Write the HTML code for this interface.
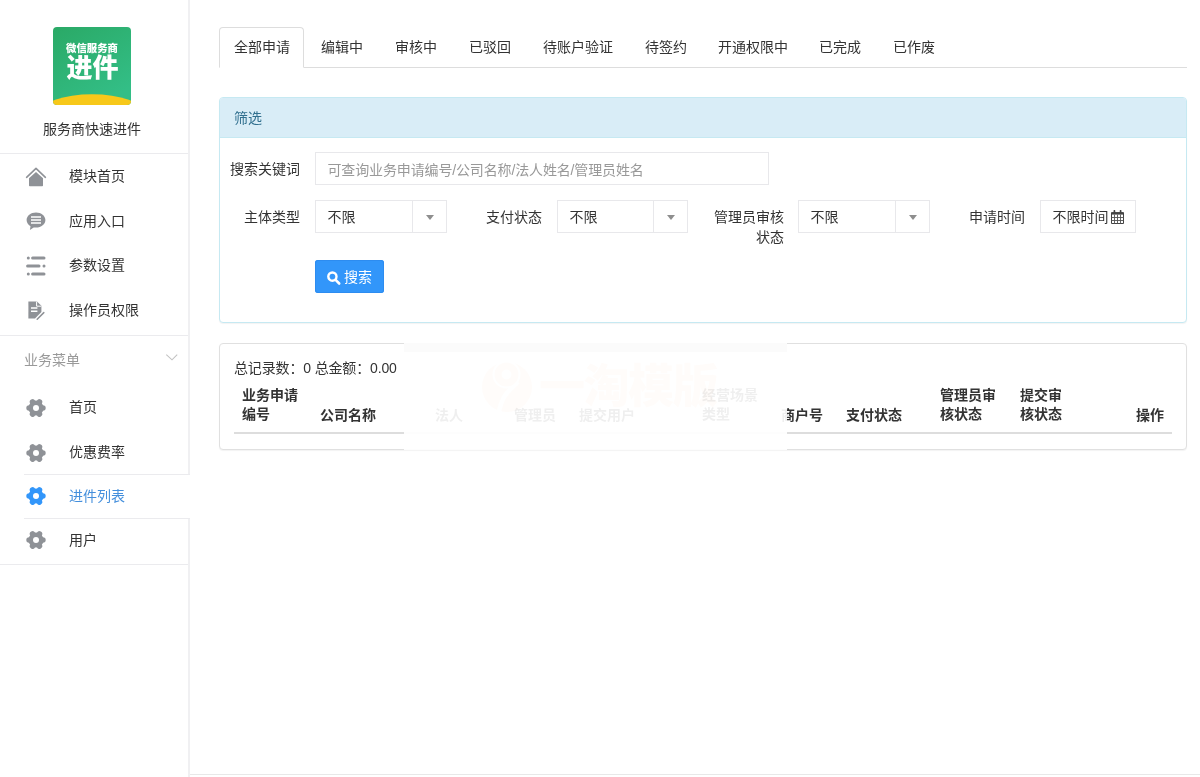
<!DOCTYPE html>
<html lang="zh-CN">
<head>
<meta charset="utf-8">
<title>服务商快速进件</title>
<style>
*{box-sizing:border-box;margin:0;padding:0}
html,body{width:1200px;height:777px;overflow:hidden;background:#fff}
body{font-family:"Liberation Sans","Noto Sans CJK SC",sans-serif;font-size:14px;color:#333;position:relative}
.abs{position:absolute}
#root{position:absolute;left:0;top:0;width:1200px;height:777px;will-change:transform}
/* sidebar */
#side{position:absolute;left:0;top:0;width:190px;height:777px}
.vr{position:absolute;left:188px;width:2px;background:#f0f0f2}
#logo{position:absolute;left:53px;top:27px;width:78px;height:78px;border-radius:4px;overflow:hidden}
#appname{position:absolute;left:0;top:119px;width:184px;text-align:center;font-size:14px;line-height:20px;color:#333}
.hr{position:absolute;height:1px;background:#ebebee}
.mi{position:absolute;left:69px;font-size:14px;line-height:20px;color:#333;white-space:nowrap}
.ic{position:absolute;left:24px;width:24px;height:24px}
/* tabs */
#tabline{position:absolute;left:219px;top:67px;width:968px;height:1px;background:#ddd}
.tab{position:absolute;top:37px;font-size:14px;line-height:20px;color:#333;white-space:nowrap}
#tabact{position:absolute;left:219px;top:27px;width:85px;height:41px;border:1px solid #ddd;border-bottom:1px solid #fff;border-radius:4px 4px 0 0;background:#fff}
/* panels */
#p1{position:absolute;left:219px;top:97px;width:968px;height:226px;border:1px solid #c6e9f2;border-radius:4px;background:#fff;box-shadow:0 1px 1px rgba(0,0,0,.05)}
#p1h{position:absolute;left:0;top:0;width:966px;height:40px;background:#d9edf7;border-bottom:1px solid #c6e9f2;border-radius:3px 3px 0 0;color:#31708f;font-size:14px;line-height:20px;padding:10px 0 0 14px}
.lbl{position:absolute;font-size:14px;line-height:20px;color:#333;text-align:right;white-space:nowrap}
.inp{position:absolute;height:33px;border:1px solid #e8e8eb;background:#fff;font-size:14px;line-height:20px;padding:6px 11.5px;color:#333;white-space:nowrap}
.sel .dv{position:absolute;right:33px;top:0;width:1px;height:31px;background:#e8e8eb}
.sel .ar{position:absolute;right:12px;top:13.5px;width:0;height:0;border-left:4.5px solid transparent;border-right:4.5px solid transparent;border-top:5px solid #8e8e8e}
#btn{position:absolute;left:315px;top:260px;width:69px;height:33px;background:#3296fa;box-shadow:inset 0 0 0 1px #2d8cf0;border-radius:3px;color:#fff;font-size:14px;line-height:20px}
#p2{position:absolute;left:219px;top:343px;width:968px;height:107px;border:1px solid #e0e0e0;border-radius:4px;background:#fff;box-shadow:0 1px 1px rgba(0,0,0,.05)}
.th{position:absolute;font-size:14px;line-height:19px;font-weight:bold;color:#333;white-space:nowrap}
#thline{position:absolute;left:234px;top:432px;width:938px;height:2px;background:#ddd}
#wm{position:absolute;left:404px;top:340px;width:383px;height:110px;background:rgba(255,255,255,.925);overflow:hidden}
#wm span{position:absolute;left:135px;top:19px;font-size:46px;line-height:54px;font-weight:900;letter-spacing:-1.5px;color:rgba(235,120,60,.022);white-space:nowrap}
#botline{position:absolute;left:190px;top:774px;width:1010px;height:1px;background:#e8e8e8}
</style>
</head>
<body><div id="root">
<div id="side">
  <div id="logo">
    <svg width="78" height="78" viewBox="0 0 78 78">
      <defs><linearGradient id="lg" x1="0" y1="0" x2="0.6" y2="1"><stop offset="0" stop-color="#2aa966"/><stop offset="1" stop-color="#33be86"/></linearGradient></defs>
      <rect width="78" height="78" fill="url(#lg)"/>
      <ellipse cx="39" cy="86.2" rx="52" ry="19" fill="#f7c81a"/>
      <text x="39" y="25.2" text-anchor="middle" font-family="'Liberation Sans','Noto Sans CJK SC',sans-serif" font-weight="900" font-size="10.4" fill="#fff">微信服务商</text>
      <text x="39.5" y="50" text-anchor="middle" font-family="'Liberation Sans','Noto Sans CJK SC',sans-serif" font-weight="900" font-size="26" fill="#fff">进件</text>
    </svg>
  </div>
  <div id="appname">服务商快速进件</div>
  <div class="hr" style="left:0;top:153px;width:190px"></div>
  <div class="mi" style="top:166px">模块首页</div>
  <div class="mi" style="top:211px">应用入口</div>
  <div class="mi" style="top:255px">参数设置</div>
  <div class="mi" style="top:300px">操作员权限</div>
  <div class="hr" style="left:0;top:335px;width:190px"></div>
  <div class="mi" style="left:24px;top:350px;color:#999">业务菜单</div>
  <div class="mi" style="top:397px">首页</div>
  <div class="mi" style="top:442px">优惠费率</div>
  <div class="mi" style="top:486px;color:#448fdc">进件列表</div>
  <div class="mi" style="top:530px">用户</div>
  <div class="hr" style="left:0;top:564px;width:190px"></div>
  <div class="hr" style="left:24px;top:474px;width:166px"></div>
  <div class="hr" style="left:24px;top:518px;width:166px"></div>
  <div class="vr" style="top:0;height:474px"></div>
  <div class="vr" style="top:519px;height:258px"></div>
  <svg class="ic" style="top:164.5px" viewBox="0 0 24 24"><path d="M2.6 12.3 L12 3.4 L21.4 12.3" fill="none" stroke="#8f9297" stroke-width="1.6" stroke-linecap="round" stroke-linejoin="round"/><path d="M5 13.2 L12 6.9 L19 13.2 L19 20.4 Q19 21.2 18.2 21.2 L5.8 21.2 Q5 21.2 5 20.4Z" fill="#8f9297"/></svg><svg class="ic" style="top:208.5px" viewBox="0 0 24 24"><path d="M12 3.4 C6.7 3.4 2.6 6.8 2.6 11 C2.6 13.6 4.1 15.8 6.5 17.2 L5.9 21 L9.7 18.4 C10.4 18.5 11.2 18.6 12 18.6 C17.3 18.6 21.4 15.2 21.4 11 C21.4 6.8 17.3 3.4 12 3.4Z" fill="#8f9297"/><path d="M7 8h10M7 11h10M7 14h10" stroke="#fff" stroke-width="1.5"/></svg><svg class="ic" style="top:254px" viewBox="0 0 24 24"><g stroke="#8f9297" stroke-width="3" stroke-linecap="round"><path d="M4.3 4h0.01M8.6 4h11.4M3.6 12h11.4M20 12h0.01M4.3 20h0.01M8.6 20h11.4"/></g></svg><svg class="ic" style="top:298px" viewBox="0 0 24 24"><path d="M4.4 3.4 L13 3.4 L17.4 7.8 L17.4 14 L11 20.4 L4.4 20.4Z" fill="#8f9297"/><path d="M12.6 3.6 L12.6 8.2 L17.2 8.2" fill="none" stroke="#fff" stroke-width="1"/><path d="M7 10h6.4M7 13.2h6.4" stroke="#fff" stroke-width="1.4"/><path d="M19.8 14.6 L13.2 21.2" stroke="#8f9297" stroke-width="1.5" stroke-linecap="round"/></svg><svg style="position:absolute;left:164px;top:351px;width:16px;height:12px" viewBox="0 0 16 12"><path d="M2.3 3.7 L8 8.8 L13.2 3.7" fill="none" stroke="#c2c2c2" stroke-width="1.1"/></svg><svg class="ic" style="top:395.8px" viewBox="0 0 24 24"><circle cx="12" cy="12" r="7.6" fill="#8f9297"/><path d="M12 12L18.90 12.00M12 12L15.45 17.98M12 12L8.55 17.98M12 12L5.10 12.00M12 12L8.55 6.02M12 12L15.45 6.02" stroke="#8f9297" stroke-width="5.6" stroke-linecap="round" fill="none"/><circle cx="12" cy="12" r="3" fill="#fff"/></svg><svg class="ic" style="top:440.9px" viewBox="0 0 24 24"><circle cx="12" cy="12" r="7.6" fill="#8f9297"/><path d="M12 12L18.90 12.00M12 12L15.45 17.98M12 12L8.55 17.98M12 12L5.10 12.00M12 12L8.55 6.02M12 12L15.45 6.02" stroke="#8f9297" stroke-width="5.6" stroke-linecap="round" fill="none"/><circle cx="12" cy="12" r="3" fill="#fff"/></svg><svg class="ic" style="top:484.3px" viewBox="0 0 24 24"><circle cx="12" cy="12" r="7.6" fill="#3296fa"/><path d="M12 12L18.90 12.00M12 12L15.45 17.98M12 12L8.55 17.98M12 12L5.10 12.00M12 12L8.55 6.02M12 12L15.45 6.02" stroke="#3296fa" stroke-width="5.6" stroke-linecap="round" fill="none"/><circle cx="12" cy="12" r="3" fill="#fff"/></svg><svg class="ic" style="top:528.0px" viewBox="0 0 24 24"><circle cx="12" cy="12" r="7.6" fill="#8f9297"/><path d="M12 12L18.90 12.00M12 12L15.45 17.98M12 12L8.55 17.98M12 12L5.10 12.00M12 12L8.55 6.02M12 12L15.45 6.02" stroke="#8f9297" stroke-width="5.6" stroke-linecap="round" fill="none"/><circle cx="12" cy="12" r="3" fill="#fff"/></svg>
</div>

<div id="tabline"></div>
<div id="tabact"></div>
<div class="tab" style="left:234px">全部申请</div>
<div class="tab" style="left:321px">编辑中</div>
<div class="tab" style="left:395px">审核中</div>
<div class="tab" style="left:469px">已驳回</div>
<div class="tab" style="left:543px">待账户验证</div>
<div class="tab" style="left:645px">待签约</div>
<div class="tab" style="left:718px">开通权限中</div>
<div class="tab" style="left:819px">已完成</div>
<div class="tab" style="left:893px">已作废</div>

<div id="p1"><div id="p1h">筛选</div></div>
<div class="lbl" style="left:200px;width:100px;top:159px">搜索关键词</div>
<div class="inp" style="left:315px;top:152px;width:454px;color:#999;padding-top:7px;letter-spacing:-0.14px">可查询业务申请编号/公司名称/法人姓名/管理员姓名</div>

<div class="lbl" style="left:200px;width:100px;top:207px">主体类型</div>
<div class="inp sel" style="left:315px;top:200px;width:132px">不限<i class="dv"></i><i class="ar"></i></div>
<div class="lbl" style="left:442px;width:100px;top:207px">支付状态</div>
<div class="inp sel" style="left:557px;top:200px;width:131px">不限<i class="dv"></i><i class="ar"></i></div>
<div class="lbl" style="left:684px;width:100px;top:207px;white-space:normal;width:70px;left:714px">管理员审核状态</div>
<div class="inp sel" style="left:798px;top:200px;width:132px">不限<i class="dv"></i><i class="ar"></i></div>
<div class="lbl" style="left:925px;width:100px;top:207px">申请时间</div>
<div class="inp" style="left:1040px;top:200px;width:96px">不限时间<svg class="abs" style="left:70px;top:9px;width:13px;height:14px" viewBox="0 0 13 14"><path d="M0.5 2.6h12v10.9h-12z" fill="none" stroke="#444" stroke-width="1"/><path d="M0.5 2.6h12v2h-12z" fill="#444"/><path d="M0.5 7.5h12M0.5 10.5h12M3.5 4.6v8.9M6.5 4.6v8.9M9.5 4.6v8.9" stroke="#555" stroke-width="0.9" fill="none"/><path d="M3.4 0.8v2.4M9.6 0.8v2.4" stroke="#444" stroke-width="1.7" stroke-linecap="round"/></svg></div>

<div id="btn"><svg class="abs" style="left:11px;top:9.8px;width:16px;height:16px" viewBox="0 0 16 16"><circle cx="6.4" cy="6.6" r="4.1" fill="none" stroke="#fff" stroke-width="2.4"/><path d="M9.6 9.9L13.2 13.5" stroke="#fff" stroke-width="2.6" stroke-linecap="round"/></svg><span class="abs" style="left:29px;top:7px">搜索</span></div>

<div id="p2"></div>
<div class="abs" style="left:234px;top:358px;line-height:20px;white-space:nowrap;letter-spacing:-0.15px">总记录数：0 总金额：0.00</div>
<div class="th" style="left:242px;top:386px">业务申请<br>编号</div>
<div class="th" style="left:320px;top:405.5px">公司名称</div>
<div class="th" style="left:435px;top:405.5px">法人</div>
<div class="th" style="left:514px;top:405.5px">管理员</div>
<div class="th" style="left:579px;top:405.5px">提交用户</div>
<div class="th" style="left:702px;top:386px">经营场景<br>类型</div>
<div class="th" style="left:781px;top:405.5px">商户号</div>
<div class="th" style="left:846px;top:405.5px">支付状态</div>
<div class="th" style="left:940px;top:386px">管理员审<br>核状态</div>
<div class="th" style="left:1020px;top:386px">提交审<br>核状态</div>
<div class="th" style="left:1136px;top:405.5px">操作</div>
<div id="thline"></div>
<div id="wm"><div class="abs" style="left:0;top:3px;width:383px;height:9px;background:#fbfbfb"></div><svg class="abs" style="left:76px;top:18px;width:54px;height:56px" viewBox="0 0 54 56"><circle cx="27" cy="29" r="25" fill="rgba(235,120,60,.022)"/><circle cx="26.5" cy="16.5" r="14" fill="#fff"/><path d="M38 24C32 30 22 36 19 54" fill="none" stroke="#fff" stroke-width="4.5"/><circle cx="26.5" cy="16.5" r="8.5" fill="none" stroke="rgba(235,120,60,.022)" stroke-width="7"/></svg><span>一淘模版</span></div>
<div id="botline"></div>
</div></body>
</html>
